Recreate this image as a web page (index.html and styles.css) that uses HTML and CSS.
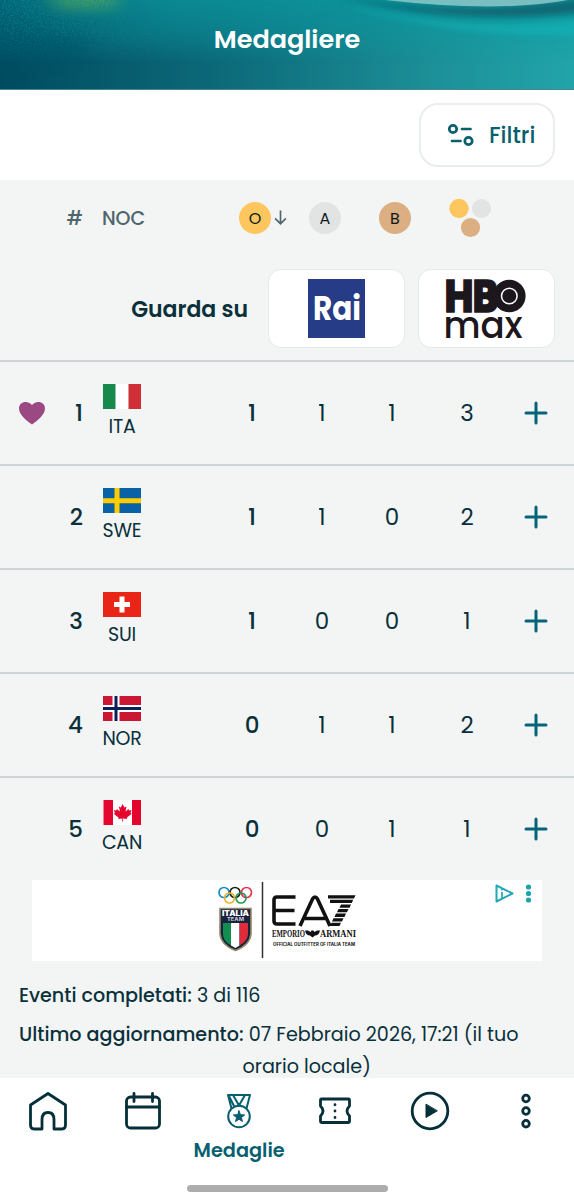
FILE: index.html
```html
<!DOCTYPE html>
<html lang="it">
<head>
<meta charset="utf-8">
<title>Medagliere</title>
<link rel="stylesheet" href="styles.css">
</head>
<body>
<div class="app">
  <header class="hero">
    <svg class="hero-art" width="574" height="91" viewBox="0 0 574 91">
      <defs>
        <linearGradient id="sea" x1="0" y1="0" x2="1" y2="0"><stop offset="0" stop-color="#004b60"/><stop offset=".4" stop-color="#0d6b7a"/><stop offset=".75" stop-color="#1c8f97"/><stop offset="1" stop-color="#21a4aa"/></linearGradient>
        <linearGradient id="fade" x1="0" y1="0" x2="0" y2="1"><stop offset="0" stop-color="#fff"/><stop offset=".35" stop-color="#fff" stop-opacity=".6"/><stop offset=".7" stop-color="#fff" stop-opacity="0"/></linearGradient>
        <linearGradient id="teal" x1="0" y1="0" x2="1" y2="0"><stop offset="0" stop-color="#0e8f97" stop-opacity=".35"/><stop offset=".3" stop-color="#0e9299" stop-opacity=".8"/><stop offset="1" stop-color="#0e9da2" stop-opacity=".85"/></linearGradient>
        <mask id="top"><rect width="574" height="91" fill="url(#fade)"/></mask>
        <filter id="soft" x="-50%" y="-200%" width="200%" height="500%"><feGaussianBlur stdDeviation="8"/></filter>
        <filter id="edge" x="-20%" y="-60%" width="140%" height="220%"><feGaussianBlur stdDeviation="3"/></filter>
        <filter id="grain" x="0" y="0" width="1" height="1"><feTurbulence type="fractalNoise" baseFrequency=".65" numOctaves="2" seed="4"/><feColorMatrix values="0 0 0 0 0  0 0 0 0 .25  0 0 0 0 .32  2.5 0 0 0 -1.05"/></filter>
        <linearGradient id="side" x1="0" y1="0" x2="1" y2="0"><stop offset="0" stop-color="#fff"/><stop offset=".45" stop-color="#fff" stop-opacity=".7"/><stop offset=".8" stop-color="#fff" stop-opacity="0"/></linearGradient>
        <mask id="left"><rect width="574" height="91" fill="url(#side)"/></mask>
      </defs>
      <rect width="574" height="91" fill="url(#sea)"/>
      <g mask="url(#top)"><rect width="574" height="91" fill="url(#teal)"/></g>
      <ellipse cx="10" cy="46" rx="80" ry="15" fill="#045267" opacity=".6" filter="url(#soft)"/>
      <ellipse cx="85" cy="-1" rx="38" ry="7" fill="#8cc63c" opacity=".7" filter="url(#soft)"/>
      <g mask="url(#left)"><g mask="url(#top)"><rect width="574" height="91" filter="url(#grain)"/></g></g>
      <path d="M340 3Q465 35 590 20V35Q455 40 340 3Z" fill="#10b9bd" opacity=".5" filter="url(#edge)"/>
      <path d="M325-6Q450 19 590-3V12Q460 28 325-6Z" fill="#07616d" opacity=".85" filter="url(#edge)"/>
      <path d="M385 0Q500 13 568 0Z" fill="#79bfc1"/>
    </svg>
    <h1 class="hero-title">Medagliere</h1>
  </header>

  <div class="toolbar">
    <button class="filter">
      <svg width="26" height="24" viewBox="0 0 26 24" fill="none" stroke="#085f6e" stroke-width="2.7" stroke-linecap="round"><circle cx="5" cy="6" r="3.7"/><path d="M14 6h8.500M4 18h8.500"/><circle cx="20.500" cy="18" r="3.700"/></svg>
      <span>Filtri</span>
    </button>
  </div>

  <main class="table">
    <div class="grid head">
      <span></span><span class="hash">#</span><span class="noc">NOC</span><span></span>
      <span class="gold-head"><b class="disc gold">O</b><svg width="14" height="18" viewBox="0 0 14 18" fill="none" stroke="#4e666b" stroke-width="1.800"><path d="M7 1v14M1.200 9.500L7 15.200l5.800-5.700"/></svg></span>
      <span class="disc-cell"><b class="disc silver">A</b></span>
      <span class="disc-cell"><b class="disc bronze">B</b></span>
      <svg class="trio" width="44" height="40" viewBox="0 0 44 40"><circle cx="12" cy="10.500" r="9.700" fill="#fec65f"/><circle cx="34.500" cy="10.500" r="9.500" fill="#e2e3e3"/><circle cx="23.500" cy="29.500" r="9.600" fill="#dbaf82"/></svg>
      <span></span>
    </div>

    <div class="watch">
      <span class="watch-label">Guarda su</span>
      <div class="channel"><svg width="58" height="59" viewBox="0 0 58 59"><rect width="57" height="59" fill="#263c86"/><text class="rai" x="5" y="41" textLength="48" lengthAdjust="spacingAndGlyphs">Rai</text></svg></div>
      <div class="channel"><svg width="84" height="64" viewBox="0 0 84 64"><g fill="#1c171d"><text class="hbo" x="0" y="34.800" textLength="53" lengthAdjust="spacingAndGlyphs">HB</text><circle cx="64.300" cy="19" r="16.300"/><circle cx="64.300" cy="19" r="7.800" fill="none" stroke="#fff" stroke-width="1.500"/><text class="max" x="-1.500" y="60.500" textLength="79" lengthAdjust="spacingAndGlyphs">max</text></g></svg></div>
    </div>

    <div class="grid row">
      <svg class="heart" width="28" height="26" viewBox="0 0 28 26"><path fill="#9a4983" d="M14 24.500C10 21.500 1 15.500 1 8.500C1 1 10 0 14 5C18 0 27 1 27 8.500C27 15.500 18 21.500 14 24.500Z"/></svg>
      <span class="rank">1</span>
      <div class="country"><svg class="flag" viewBox="0 0 38 25"><path fill="#168a4d" d="M0 0h13v25H0z"/><path fill="#fff" d="M12.500 0h13v25h-13z"/><path fill="#cf2f36" d="M25.500 0H38v25H25.500z"/></svg><span>ITA</span></div><span></span>
      <span class="num first">1</span><span class="num">1</span><span class="num">1</span><span class="num">3</span>
      <svg class="plus" viewBox="0 0 24 24"><path d="M12 2v20M2 12h20"/></svg>
    </div>
    <div class="grid row">
      <span></span><span class="rank">2</span>
      <div class="country"><svg class="flag" viewBox="0 0 38 25"><path fill="#0962a5" d="M0 0h38v25H0z"/><path fill="#fc0" d="M11.500 0h5v25h-5zM0 10.200h38v5H0z"/></svg><span>SWE</span></div><span></span>
      <span class="num first">1</span><span class="num">1</span><span class="num">0</span><span class="num">2</span>
      <svg class="plus" viewBox="0 0 24 24"><path d="M12 2v20M2 12h20"/></svg>
    </div>
    <div class="grid row">
      <span></span><span class="rank">3</span>
      <div class="country"><svg class="flag" viewBox="0 0 38 25"><path fill="#e82516" d="M0 0h38v25H0z"/><path fill="#fff" d="M16.500 4.500h5v5.500H27v5h-5.500v5.500h-5V15H11v-5h5.500z"/></svg><span>SUI</span></div><span></span>
      <span class="num first">1</span><span class="num">0</span><span class="num">0</span><span class="num">1</span>
      <svg class="plus" viewBox="0 0 24 24"><path d="M12 2v20M2 12h20"/></svg>
    </div>
    <div class="grid row">
      <span></span><span class="rank">4</span>
      <div class="country"><svg class="flag" viewBox="0 0 38 25"><path fill="#cb1634" d="M0 0h38v25H0z"/><path fill="#fff" d="M9.500 0h7v25h-7zM0 9h38v7H0z"/><path fill="#09205b" d="M11.500 0h3v25h-3zM0 11h38v3H0z"/></svg><span>NOR</span></div><span></span>
      <span class="num first">0</span><span class="num">1</span><span class="num">1</span><span class="num">2</span>
      <svg class="plus" viewBox="0 0 24 24"><path d="M12 2v20M2 12h20"/></svg>
    </div>
    <div class="grid row">
      <span></span><span class="rank">5</span>
      <div class="country"><svg class="flag" viewBox="0 0 38 25"><path fill="#fff" d="M0 0h38v25H0z"/><path fill="#e4062f" d="M.500 0H10v25H.500zM29 0h9.500v25H29z"/><path fill="#e4062f" d="M19.500 4l2 3.500 2-1-1 5 3-2.500.500 1.500 2.500-.500-1 3 1.200.700-5 4 .500 1.300-4.200-.500.200 3h-1l.200-3-4.200.500.500-1.300-5-4 1.200-.700-1-3 2.500.500.500-1.500 3 2.500-1-5 2 1z"/></svg><span>CAN</span></div><span></span>
      <span class="num first">0</span><span class="num">0</span><span class="num">1</span><span class="num">1</span>
      <svg class="plus" viewBox="0 0 24 24"><path d="M12 2v20M2 12h20"/></svg>
    </div>

    <div class="ad">
      <svg width="510" height="81" viewBox="0 0 510 81">
        <g fill="none" stroke-width="1.700"><circle cx="192" cy="12.500" r="5" stroke="#188ac5"/><circle cx="203" cy="12.500" r="5" stroke="#222"/><circle cx="214.500" cy="12.500" r="5" stroke="#e6364d"/><circle cx="197.500" cy="18" r="5" stroke="#efb52c"/><circle cx="209" cy="18" r="5" stroke="#249b58"/></g>
        <path d="M188 28.500h31V54q-1 11-15.500 16.500Q189 65 188 54Z" fill="#18243e" stroke="#968969" stroke-width="1.600"/>
        <path d="M191 43h8v22.500Q191 61 191 54Z" fill="#138e52"/><path d="M199 43h8.500v22.500l-4 2.500-4.500-2.500Z" fill="#fff"/><path d="M207.500 43h8.500v11q0 7-8.500 11.500Z" fill="#df2c3b"/>
        <text class="italia" x="190" y="35.500" textLength="27" lengthAdjust="spacingAndGlyphs">ITALIA</text><text class="team" x="195" y="41" textLength="17" lengthAdjust="spacingAndGlyphs">TEAM</text>
        <path d="M230.500 2v76" stroke="#333" stroke-width="1.500"/>
        <g fill="none" stroke="#111" stroke-width="3.600"><path d="M263.500 17h-18.500q-3 0-3 3V41q0 3 3 3h18.500M242 30.500h20.500M268 46l12.500-27q2.500-4 5 0l12.500 27M273 38.500h20"/></g>
        <g fill="#111"><path d="M296 15.200h27.500l-1.500 3.300H296zM298 19.800h23.200l-1.500 3.300h-21.700zM309 24.400h10l-1.500 3.300h-10zM306.500 29h10l-1.500 3.300h-10zM304 33.600h10l-1.500 3.300h-10zM301.500 38.200h10l-1.500 3.300h-10zM299.500 42.800h9.500l-1.500 3.300h-9.500z"/>
        <text class="armani" x="240" y="56.500" textLength="33" lengthAdjust="spacingAndGlyphs">EMPORIO</text><path d="M273 50.500h3l2.500 1.500 1-1.500h2l1 1.500 2.500-1.500h3q-1 5-5 5l-2.500 2-2.500-2q-4 0-5-5z"/><text class="armani" x="288" y="56.500" textLength="36" lengthAdjust="spacingAndGlyphs">ARMANI</text>
        <text class="outfit" x="241" y="65.500" textLength="82" lengthAdjust="spacingAndGlyphs">OFFICIAL OUTFITTER OF ITALIA TEAM</text></g>
        <path d="M464.500 5.500v16l16-8z" fill="none" stroke="#22a7b4" stroke-width="2" stroke-linejoin="round"/><path d="M470 12v6M470 9v1.500" stroke="#22a7b4" stroke-width="1.700"/><g fill="#1aa5ac"><circle cx="496.500" cy="7" r="2.600"/><circle cx="496.500" cy="13.500" r="2.600"/><circle cx="496.500" cy="20" r="2.600"/></g>
      </svg>
    </div>

    <div class="info">
      <p><b class="done">Eventi completati:</b> <span class="count">3 di 116</span></p>
      <p class="updated"><b class="when">Ultimo aggiornamento:</b> <span class="date">07 Febbraio 2026, 17:21 (il tuo</span></p>
      <p class="local">orario locale)</p>
    </div>
  </main>

  <nav class="nav">
    <a><svg viewBox="0 0 42 42"><path d="M21 3.500L3.500 15v20q0 4 3.500 4h8V29.500q0-7 6-7t6 7V39h8q3.500 0 3.500-4V15z"/></svg></a>
    <a><svg viewBox="0 0 42 42"><rect x="4.500" y="7" width="33" height="31" rx="4"/><path d="M4.500 17h33M12 3.500v8M30.500 3.500v8"/></svg></a>
    <a class="active"><svg viewBox="0 0 42 42"><g><circle cx="21" cy="26.500" r="10.800"/><path d="M13.500 18.500L10 5h22l-3.500 13.500M15 5l6 10.500M21 15.500L27 5M16 16L11 6"/></g><path class="solid" d="M21 20.800l1.500 3.900 4.200.2-3.300 2.600 1.100 4-3.500-2.200-3.500 2.200 1.100-4-3.300-2.600 4.200-.2z"/></svg><span>Medaglie</span></a>
    <a><svg viewBox="0 0 42 42"><path d="M7.500 9h27q1 0 1 1v6q-5 5 0 10v5.500q0 1-1 1h-27q-1 0-1-1V26q5-5 0-10v-6q0-1 1-1z"/><path d="M21 14.700v.100M21 21v.100M21 27.400v.100"/></svg></a>
    <a><svg viewBox="0 0 42 42"><circle cx="21" cy="21" r="17.800"/><path class="solid" d="M17 14.500v13l11-6.500z"/></svg></a>
    <a><svg viewBox="0 0 42 42"><circle cx="21" cy="8.500" r="3.300"/><circle cx="21" cy="21" r="3.300"/><circle cx="21" cy="33.700" r="3.300"/></svg></a>
  </nav>
  <div class="handle"></div>
</div>
</body>
</html>
```

FILE: styles.css
```css
* { box-sizing: border-box; }
body { margin: 0; font-family: Poppins, Inter, "Liberation Sans", sans-serif; color: #0a303a; background: #fff; }
.app { width: 574px; height: 1200px; overflow: hidden; display: flex; flex-direction: column; }
p, h1 { margin: 0; }
.hero { position: relative; height: 90px; overflow: hidden; border-bottom: 1px solid #43898f; }
.hero-art { position: absolute; inset: 0; }
.hero-title { position: relative; padding-top: 23px; text-align: center; color: #fff; font-size: 25.500px; line-height: 32px; font-weight: 600; }
.toolbar { height: 90px; display: flex; justify-content: flex-end; padding: 13px 19px 0 0; }
.filter { width: 136px; height: 64px; display: flex; align-items: center; padding: 0 0 0 27px; gap: 15px; background: #fff; border: 2px solid #e9eded; border-radius: 19px; color: #085f6e; font: 500 22.500px Poppins, Inter, sans-serif; }
.table { height: 898px; background: #f3f5f5; }
.grid { display: grid; grid-template-columns: 64px 19px 78px 56px 70px 70px 70px 80px 58px; align-items: center; }
.head { height: 76px; color: #4e666b; font-size: 19px; font-weight: 500; }
.hash { justify-self: end; }
.noc { padding-left: 19px; letter-spacing: -.1px; }
.gold-head { display: flex; align-items: center; gap: 3px; padding-left: 22px; }
.disc-cell { display: flex; justify-content: center; padding-left: 6px; }
.disc { flex: none; width: 32px; height: 32px; display: grid; place-items: center; border-radius: 50%; font-size: 16px; font-weight: 400; color: #0b1a1d; }
.gold { background: #fec65f; }
.silver { background: #e2e3e3; }
.bronze { background: #dbaf82; }
.trio { margin-left: 20px; }
.watch { height: 104px; display: flex; align-items: center; justify-content: flex-end; gap: 13px; padding: 1px 19px 0 0; }
.watch-label { margin-right: 7px; padding-top: 1px; font-size: 22px; font-weight: 600; }
.channel { width: 137px; height: 79px; display: grid; place-items: center; background: #fff; border: 1px solid #e5e9e9; border-radius: 13px; }
.channel svg { overflow: visible; }
.rai { fill: #fff; font: 700 33px Poppins, sans-serif; }
.hbo { font: 900 44px Inter, sans-serif; stroke: #1c171d; stroke-width: 1.500px; }
.max { font: 500 38px Poppins, sans-serif; }
.row { height: 103.900px; border-top: 2px solid #ccd5d5; }
.heart { justify-self: center; }
.rank { justify-self: end; font-size: 23px; font-weight: 500; }
.num { text-align: center; font-size: 23px; }
.first { font-weight: 500; }
.country { display: flex; flex-direction: column; align-items: center; padding-top: 2px; }
.flag { width: 38px; height: 25px; }
.country span { font-size: 19px; line-height: 32px; padding-top: 2px; letter-spacing: -.2px; }
.plus { width: 24px; height: 24px; justify-self: center; fill: none; stroke: #046478; stroke-width: 3; stroke-linecap: round; }
.ad { width: 510px; height: 81px; margin: .500px auto 0; background: #fff; }
.ad svg { display: block; }
.italia { font: 900 7px Inter, sans-serif; fill: #fff; }
.team { font: 700 5px Inter, sans-serif; fill: #ccd; }
.armani { font: 700 10px "Liberation Serif", serif; }
.outfit { font: 700 4.500px Inter, sans-serif; }
.info { padding: 19px 0 0 19px; font-size: 19.150px; line-height: 32px; white-space: nowrap; }
.info b { font-weight: 500; }
.updated { margin-top: 7px; }
.local { padding-left: 223.500px; }
.nav { height: 105px; display: grid; grid-template-columns: repeat(6, 1fr); background: #fff; }
.nav a { display: flex; flex-direction: column; align-items: center; padding-top: 12px; color: #052f39; }
.nav svg { width: 42px; height: 42px; flex: none; fill: none; stroke: currentColor; stroke-width: 2.800; stroke-linecap: round; stroke-linejoin: round; }
.nav .solid { fill: currentColor; stroke-width: 1; }
.nav .active { color: #075f70; }
.nav .active g { stroke-width: 2; }
.nav span { margin-top: 6px; font-size: 19.300px; line-height: 26px; font-weight: 600; }
.handle { width: 201px; height: 7px; margin: 2px auto 0; background: #adadad; border-radius: 4px; }
```
